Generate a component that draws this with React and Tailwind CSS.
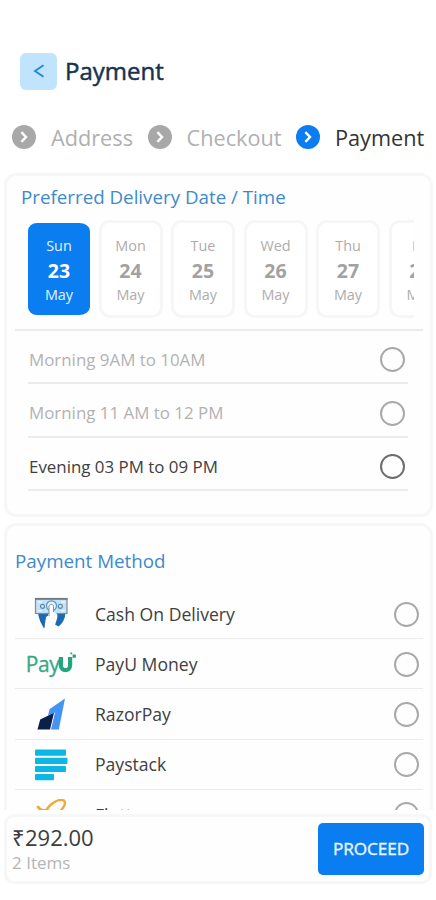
import { useState } from "react";

const steps = [
  { label: "Address", active: false, width: "w-[135.5px]" },
  { label: "Checkout", active: false, width: "w-[148.5px]" },
  { label: "Payment", active: true, width: "w-[130px]" },
];

const dates = [
  { day: "Sun", date: 23 },
  { day: "Mon", date: 24 },
  { day: "Tue", date: 25 },
  { day: "Wed", date: 26 },
  { day: "Thu", date: 27 },
  { day: "Fri", date: 28 },
];

const slots = [
  { label: "Morning 9AM to 10AM", enabled: false },
  { label: "Morning 11 AM to 12 PM", enabled: false },
  { label: "Evening 03 PM to 09 PM", enabled: true },
];

const StepIcon = ({ active }) => (
  <svg width="24" height="24" viewBox="0 0 24 24" className="shrink-0">
    <circle cx="12" cy="12" r="12" fill={active ? "#0a7df0" : "#a8a8a8"} />
    <path
      d="M9.4 7.2 14 12l-4.6 4.8"
      fill="none"
      stroke="#fff"
      strokeWidth="2.4"
    />
  </svg>
);

const CashIcon = () => (
  <svg width="34" height="34" viewBox="0 0 34 34">
    <path d="M4 16h10v10l-4 5.500C7 26.500 4.800 22 4 16z" fill="#1b69b3" />
    <path d="M20 16h11.500c-.5 6-3 10.500-7 13.500L20 27z" fill="#1b69b3" />
    <rect x="1.500" y="1.500" width="31.500" height="15" fill="#bfe3fa" stroke="#858b90" strokeWidth="1.200" />
    <path d="M1 2h32.500" stroke="#6d7276" strokeWidth="1.400" />
    <path d="M4 5h4M27 5h4M4 13.800h4M27 13.800h4" stroke="#e9f6fe" strokeWidth="1.500" />
    <circle cx="8.500" cy="9.300" r="2" fill="#d6ecfb" stroke="#5b87ad" strokeWidth="1.200" />
    <circle cx="26.300" cy="9.300" r="2" fill="#d6ecfb" stroke="#5b87ad" strokeWidth="1.200" />
    <circle cx="17.500" cy="8.800" r="5" fill="#e4f3fd" stroke="#5b94c4" strokeWidth="1.200" />
    <path
      d="M15 18V9.500c0-2.800 4.500-2.800 4.500 0V15l3 1.500c1.300 1 1 3 .6 5L21 28l-2 6h-8.500l.3-6 1.200-8z"
      fill="#fff"
    />
    <path
      d="M15 19V9.500c0-2.800 4.500-2.800 4.500 0V15"
      fill="none"
      stroke="#7d8489"
      strokeWidth="0.900"
    />
  </svg>
);

const PayUIcon = () => (
  <div className="flex items-end text-[#36a883]">
    <span className="text-[21px] leading-[25px] tracking-[-0.4px] [-webkit-text-stroke:0.3px_#36a883]">
      Pay
    </span>
    <svg width="18" height="25" viewBox="0 0 18 25" className="-ml-px">
      <path
        d="M2.900 5v8.500c0 6.200 9.200 6.200 9.200 0V5"
        fill="none"
        stroke="#25a57b"
        strokeWidth="4.200"
      />
      <path d="M14.600 2.600h3.200v3.200h-3.200zM12.400.4h1.800v1.800h-1.800z" fill="#25a57b" />
    </svg>
  </div>
);

const RazorIcon = () => (
  <svg width="30" height="32" viewBox="0 0 30 32">
    <path d="M29 .5 22.800 31.500H15L19 14.500l-7 3 1.700-6.500z" fill="#4394f4" />
    <path d="M18 14.800 14 31.500H1.500l2.700-10z" fill="#0b1f48" />
  </svg>
);

const PaystackIcon = () => (
  <svg width="34" height="32" viewBox="0 0 34 32" fill="#0bb7e4">
    <rect x="1" y="0.500" width="31" height="6.200" rx="1" />
    <rect x="1" y="8.700" width="32.500" height="6.200" rx="1" />
    <rect x="1" y="16.900" width="31" height="6.200" rx="1" />
    <rect x="1" y="25.100" width="19" height="6.200" rx="1" />
  </svg>
);

const FlutterwaveIcon = () => (
  <svg width="34" height="32" viewBox="0 0 34 32" fill="none" stroke="#f2a93c">
    <path d="M11 14C14 5 25-1 30 1.600c3 3-2 11-12 16.400" strokeWidth="2.400" />
    <path d="M3.500 7c1 2.500 3.500 4 7 4.500 6 .5 12.500 1 12.500 6 0 4-5 8-10 8" strokeWidth="2.800" />
  </svg>
);

const methods = [
  { label: "Cash On Delivery", Icon: CashIcon },
  { label: "PayU Money", Icon: PayUIcon },
  { label: "RazorPay", Icon: RazorIcon },
  { label: "Paystack", Icon: PaystackIcon },
  { label: "Flutterwave", Icon: FlutterwaveIcon },
];

const Radio = ({ checked, onClick, dark }) => (
  <button
    type="button"
    onClick={onClick}
    className={`flex size-[25px] shrink-0 items-center justify-center rounded-full border-2 ${
      dark ? "border-[#6c6c6c]" : "border-[#a9a9a9]"
    }`}
  >
    {checked && <span className="size-3 rounded-full bg-[#0a7df0]" />}
  </button>
);

const App = () => {
  const [selectedDate, setSelectedDate] = useState(23);
  const [slot, setSlot] = useState(null);
  const [method, setMethod] = useState(null);

  return (
    <div className="flex h-[900px] w-[436px] flex-col overflow-hidden bg-white font-['Open_Sans',sans-serif]">
      <header className="mt-[52px] flex h-[38px] shrink-0 items-center pl-5">
        <button
          type="button"
          className="flex size-[37px] items-center justify-center rounded-[6px] bg-[#bfe4fc]"
        >
          <svg width="12" height="14" viewBox="0 0 12 14" fill="none">
            <path d="M10.500 1.200 2 7l8.500 5.800" stroke="#2a86d2" strokeWidth="1.900" />
          </svg>
        </button>
        <h1 className="ml-2 text-[24px] text-[#17344f] [-webkit-text-stroke:0.5px_#17344f]">
          Payment
        </h1>
      </header>

      <nav className="mt-[35px] flex h-6 shrink-0 items-center pl-3">
        {steps.map((step) => (
          <div key={step.label} className={`flex shrink-0 items-center ${step.width}`}>
            <StepIcon active={step.active} />
            <span
              className={`mt-[2px] ml-[15px] text-[21.700px] leading-[26px] ${
                step.active ? "text-[#333]" : "text-[#b0b0b0]"
              }`}
            >
              {step.label}
            </span>
          </div>
        ))}
      </nav>

      <main className="mt-[24px] flex h-[637px] shrink-0 flex-col gap-[6px] overflow-hidden pr-[3px] pl-1">
        <section className="h-[344px] shrink-0 rounded-[12px] border-[3px] border-[#f7f7f7] bg-[#fefefe] pr-[7px] pl-2">
          <h2 className="mt-[7px] pl-[6px] text-[18.750px] leading-[28px] text-[#3d8acb]">
            Preferred Delivery Date / Time
          </h2>
          <div className="mt-[9px] mr-[9px] ml-[11px] flex h-[98px] gap-[8.500px] overflow-hidden">
            {dates.map(({ day, date }) => {
              const active = date === selectedDate;
              return (
                <button
                  key={date}
                  type="button"
                  onClick={() => setSelectedDate(date)}
                  className={`flex h-[98px] w-[64px] shrink-0 flex-col items-center rounded-[11px] bg-clip-padding pt-[12px] text-[14.400px] leading-[22px] ${
                    active
                      ? "border-y-[3px] border-r-px border-l-2 border-transparent bg-[#0a7df0] text-[#e4f2ff]"
                      : "border-[3px] border-[#f6f6f6] bg-white text-[#adadad]"
                  }`}
                >
                  <span>{day}</span>
                  <span
                    className={`text-[19.500px] leading-[27px] font-bold ${
                      active ? "text-white" : "text-[#a2a2a2]"
                    }`}
                  >
                    {date}
                  </span>
                  <span>May</span>
                </button>
              );
            })}
          </div>
          <div className="mt-[11px] border-t-2 border-[#ebebeb] pr-[15px] pl-[13px]">
            {slots.map((item) => (
              <div
                key={item.label}
                className="flex h-[53.400px] items-center justify-between border-b-2 border-[#ebebeb] pt-[6px] pr-[3px] pl-px"
              >
                <span
                  className={`text-[16.900px] ${item.enabled ? "text-[#404040]" : "text-[#b2b2b2]"}`}
                >
                  {item.label}
                </span>
                <Radio
                  dark={item.enabled}
                  checked={slot === item.label}
                  onClick={() => item.enabled && setSlot(item.label)}
                />
              </div>
            ))}
          </div>
        </section>

        <section className="h-[400px] shrink-0 rounded-[12px] border-[3px] border-[#f7f7f7] bg-[#fefefe] pr-[7px] pl-2">
          <h2 className="mt-[21px] text-[18.800px] leading-[28px] text-[#3d8acb]">
            Payment Method
          </h2>
          <div className="mt-[14px]">
            {methods.map(({ label, Icon }) => (
              <div
                key={label}
                className="flex h-[50.200px] items-center border-b border-[#ebebeb] pt-px pr-[4px]"
              >
                <div className="flex w-[72px] shrink-0 items-center justify-center">
                  <Icon />
                </div>
                <span className="ml-2 flex-1 text-[17.600px] text-[#404040]">{label}</span>
                <Radio checked={method === label} onClick={() => setMethod(label)} />
              </div>
            ))}
          </div>
        </section>
      </main>

      <footer className="mx-1 mt-[4px] flex h-[70px] shrink-0 items-center justify-between rounded-[10px] border-[3px] border-[#f7f7f7] bg-[#fefefe] px-[5px]">
        <div>
          <p className="text-[22px] leading-[28px] text-[#3c3c3c]">₹292.00</p>
          <p className="text-[17px] leading-[24px] text-[#b5b5b5]">2 Items</p>
        </div>
        <button
          type="button"
          className="h-[52px] w-[106px] rounded-[5px] bg-[#0a7df0] text-[17.200px] tracking-[-0.1px] text-[#e6f4ff] [-webkit-text-stroke:0.4px_#e6f4ff]"
        >
          PROCEED
        </button>
      </footer>
    </div>
  );
};

export default App;
